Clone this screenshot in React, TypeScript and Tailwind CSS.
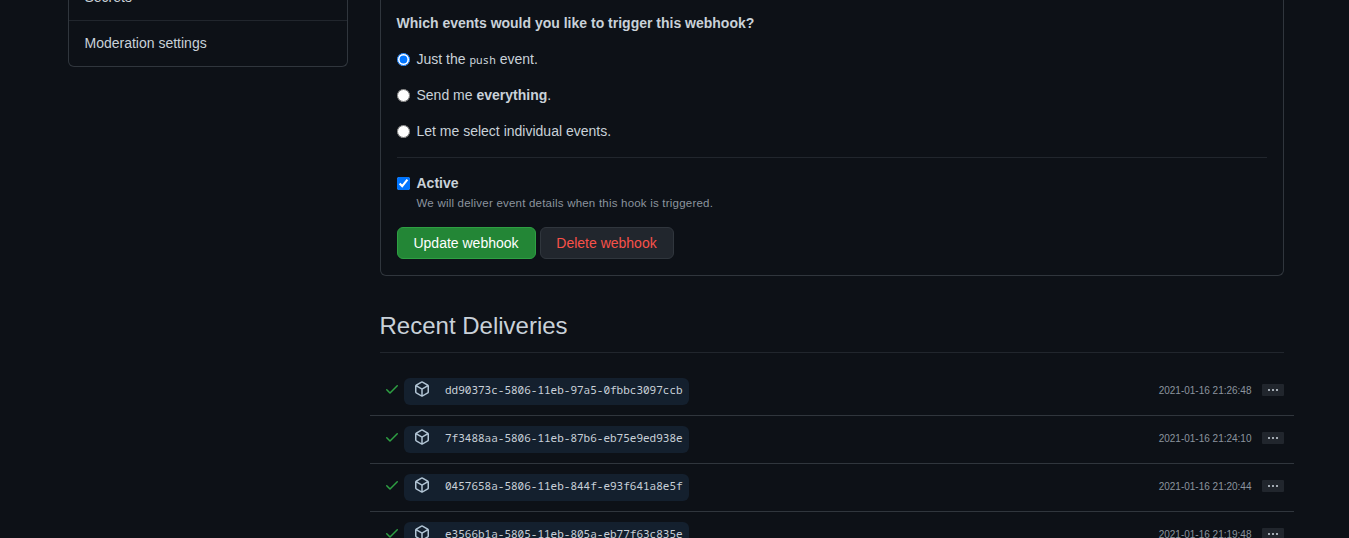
import React from "react";

const deliveries = [
  { id: "dd90373c-5806-11eb-97a5-0fbbc3097ccb", time: "2021-01-16 21:26:48" },
  { id: "7f3488aa-5806-11eb-87b6-eb75e9ed938e", time: "2021-01-16 21:24:10" },
  { id: "0457658a-5806-11eb-844f-e93f641a8e5f", time: "2021-01-16 21:20:44" },
  { id: "e3566b1a-5805-11eb-805a-eb77f63c835e", time: "2021-01-16 21:19:48" },
];

function CheckIcon() {
  return (
    <svg viewBox="0 0 16 16" className="size-4 fill-[#2ea043]">
      <path d="M13.78 4.22a.75.75 0 010 1.06l-7.25 7.25a.75.75 0 01-1.06 0L2.22 9.28a.75.75 0 011.06-1.06L6 10.94l6.72-6.72a.75.75 0 011.06 0z" />
    </svg>
  );
}

function PackageIcon() {
  return (
    <svg viewBox="0 0 16 16" className="size-4 fill-[#b1c4d4]">
      <path
        fillRule="evenodd"
        d="M8.878.392a1.75 1.75 0 00-1.756 0l-5.25 3.045A1.75 1.75 0 001 4.951v6.098c0 .624.332 1.2.872 1.514l5.25 3.045a1.75 1.75 0 001.756 0l5.25-3.045c.54-.313.872-.89.872-1.514V4.951c0-.624-.332-1.2-.872-1.514L8.878.392zM7.875 1.69a.25.25 0 01.25 0l4.63 2.685L8 7.133 3.245 4.375l4.63-2.685zM2.5 5.677v5.372c0 .09.047.171.125.216l4.625 2.683V8.432L2.5 5.677zm6.25 8.271l4.625-2.683a.25.25 0 00.125-.216V5.677L8.75 8.432v5.516z"
      />
    </svg>
  );
}

function EventOption({ checked, children }: { checked?: boolean; children: React.ReactNode }) {
  return (
    <label className="flex h-[21px] items-center gap-[7px]">
      <input type="radio" name="events" defaultChecked={checked} className="size-[13px] shrink-0" />
      <span className="h-[21px]">{children}</span>
    </label>
  );
}

function Delivery({ id, time }: { id: string; time: string }) {
  return (
    <li className="flex h-12 shrink-0 items-start border-b border-[#30363d] pr-2.5 pl-3.5">
      <div className="pt-[13px]">
        <CheckIcon />
      </div>
      <div className="mt-2.5 ml-1 flex h-[27px] w-[285px] items-start rounded-md bg-[#14202e] pl-2.5">
        <div className="pt-[3px]">
          <PackageIcon />
        </div>
        <code className="ml-[15.5px] font-['Noto_Sans_Mono','DejaVu_Sans_Mono',monospace] text-[11px] leading-[23px] text-[#c9d1d9]">{id}</code>
      </div>
      <time className="mt-2.5 ml-auto text-[10px] leading-[26px] text-[#8b949e]">{time}</time>
      <button className="mt-4 ml-2.5 flex h-3 w-[22px] items-center justify-center rounded-[1px] bg-[#21262d]" aria-label="More">
        <span className="flex gap-[2px]">
          <i className="h-[2px] w-[2px] bg-[#a3abb3]" />
          <i className="h-[2px] w-[2px] bg-[#a3abb3]" />
          <i className="h-[2px] w-[2px] bg-[#a3abb3]" />
        </span>
      </button>
    </li>
  );
}

export default function App() {
  return (
    <div className="flex h-[538px] items-start gap-8 overflow-hidden bg-[#0d1117] pl-[67.5px] font-['Liberation_Sans',Arial,sans-serif] text-[14px] leading-[21px] text-[#c9d1d9]">
      <nav className="flex h-[67px] w-[280px] shrink-0 flex-col justify-end overflow-hidden rounded-b-md border border-t-0 border-[#30363d]">
        <a className="shrink-0 border-b border-[#21262d] px-4 pb-3">Secrets</a>
        <a className="h-[45px] shrink-0 px-4 pt-3">Moderation settings</a>
      </nav>

      <main className="w-[904px] shrink-0">
        <section className="h-[276px] rounded-b-md border border-t-0 border-[#30363d] px-4 pt-[13px]">
          <h3 className="font-bold">Which events would you like to trigger this webhook?</h3>
          <div className="mt-[15px] flex flex-col gap-[15px]">
            <EventOption checked>
              Just the <code className="font-['Noto_Sans_Mono','DejaVu_Sans_Mono',monospace] text-[11px] leading-none">push</code> event.
            </EventOption>
            <EventOption>
              Send me <strong>everything</strong>.
            </EventOption>
            <EventOption>Let me select individual events.</EventOption>
          </div>
          <hr className="mt-[15px] border-[#21262d]" />
          <label className="mt-[15px] flex h-[21px] items-center gap-[7px] font-bold">
            <input type="checkbox" defaultChecked className="size-[13px]" />
            Active
          </label>
          <p className="ml-5 h-[18px] text-[11.5px] leading-[18px] tracking-[0.213px] text-[#8b949e]">
            We will deliver event details when this hook is triggered.
          </p>
          <div className="mt-[15px] flex gap-1">
            <button className="h-8 w-[139px] rounded-md border border-[#2ea043] bg-[#238636] text-white">Update webhook</button>
            <button className="h-8 w-[134px] rounded-md border border-[#30363d] bg-[#21262d] text-[#f85149]">Delete webhook</button>
          </div>
        </section>

        <h2 className="mt-[32px] h-[45px] border-b border-[#21262d] text-2xl leading-[36px]">Recent Deliveries</h2>
        <ul className="-mx-2.5 mt-[15px]">
          {deliveries.map((d) => (
            <Delivery key={d.id} {...d} />
          ))}
        </ul>
      </main>
    </div>
  );
}
